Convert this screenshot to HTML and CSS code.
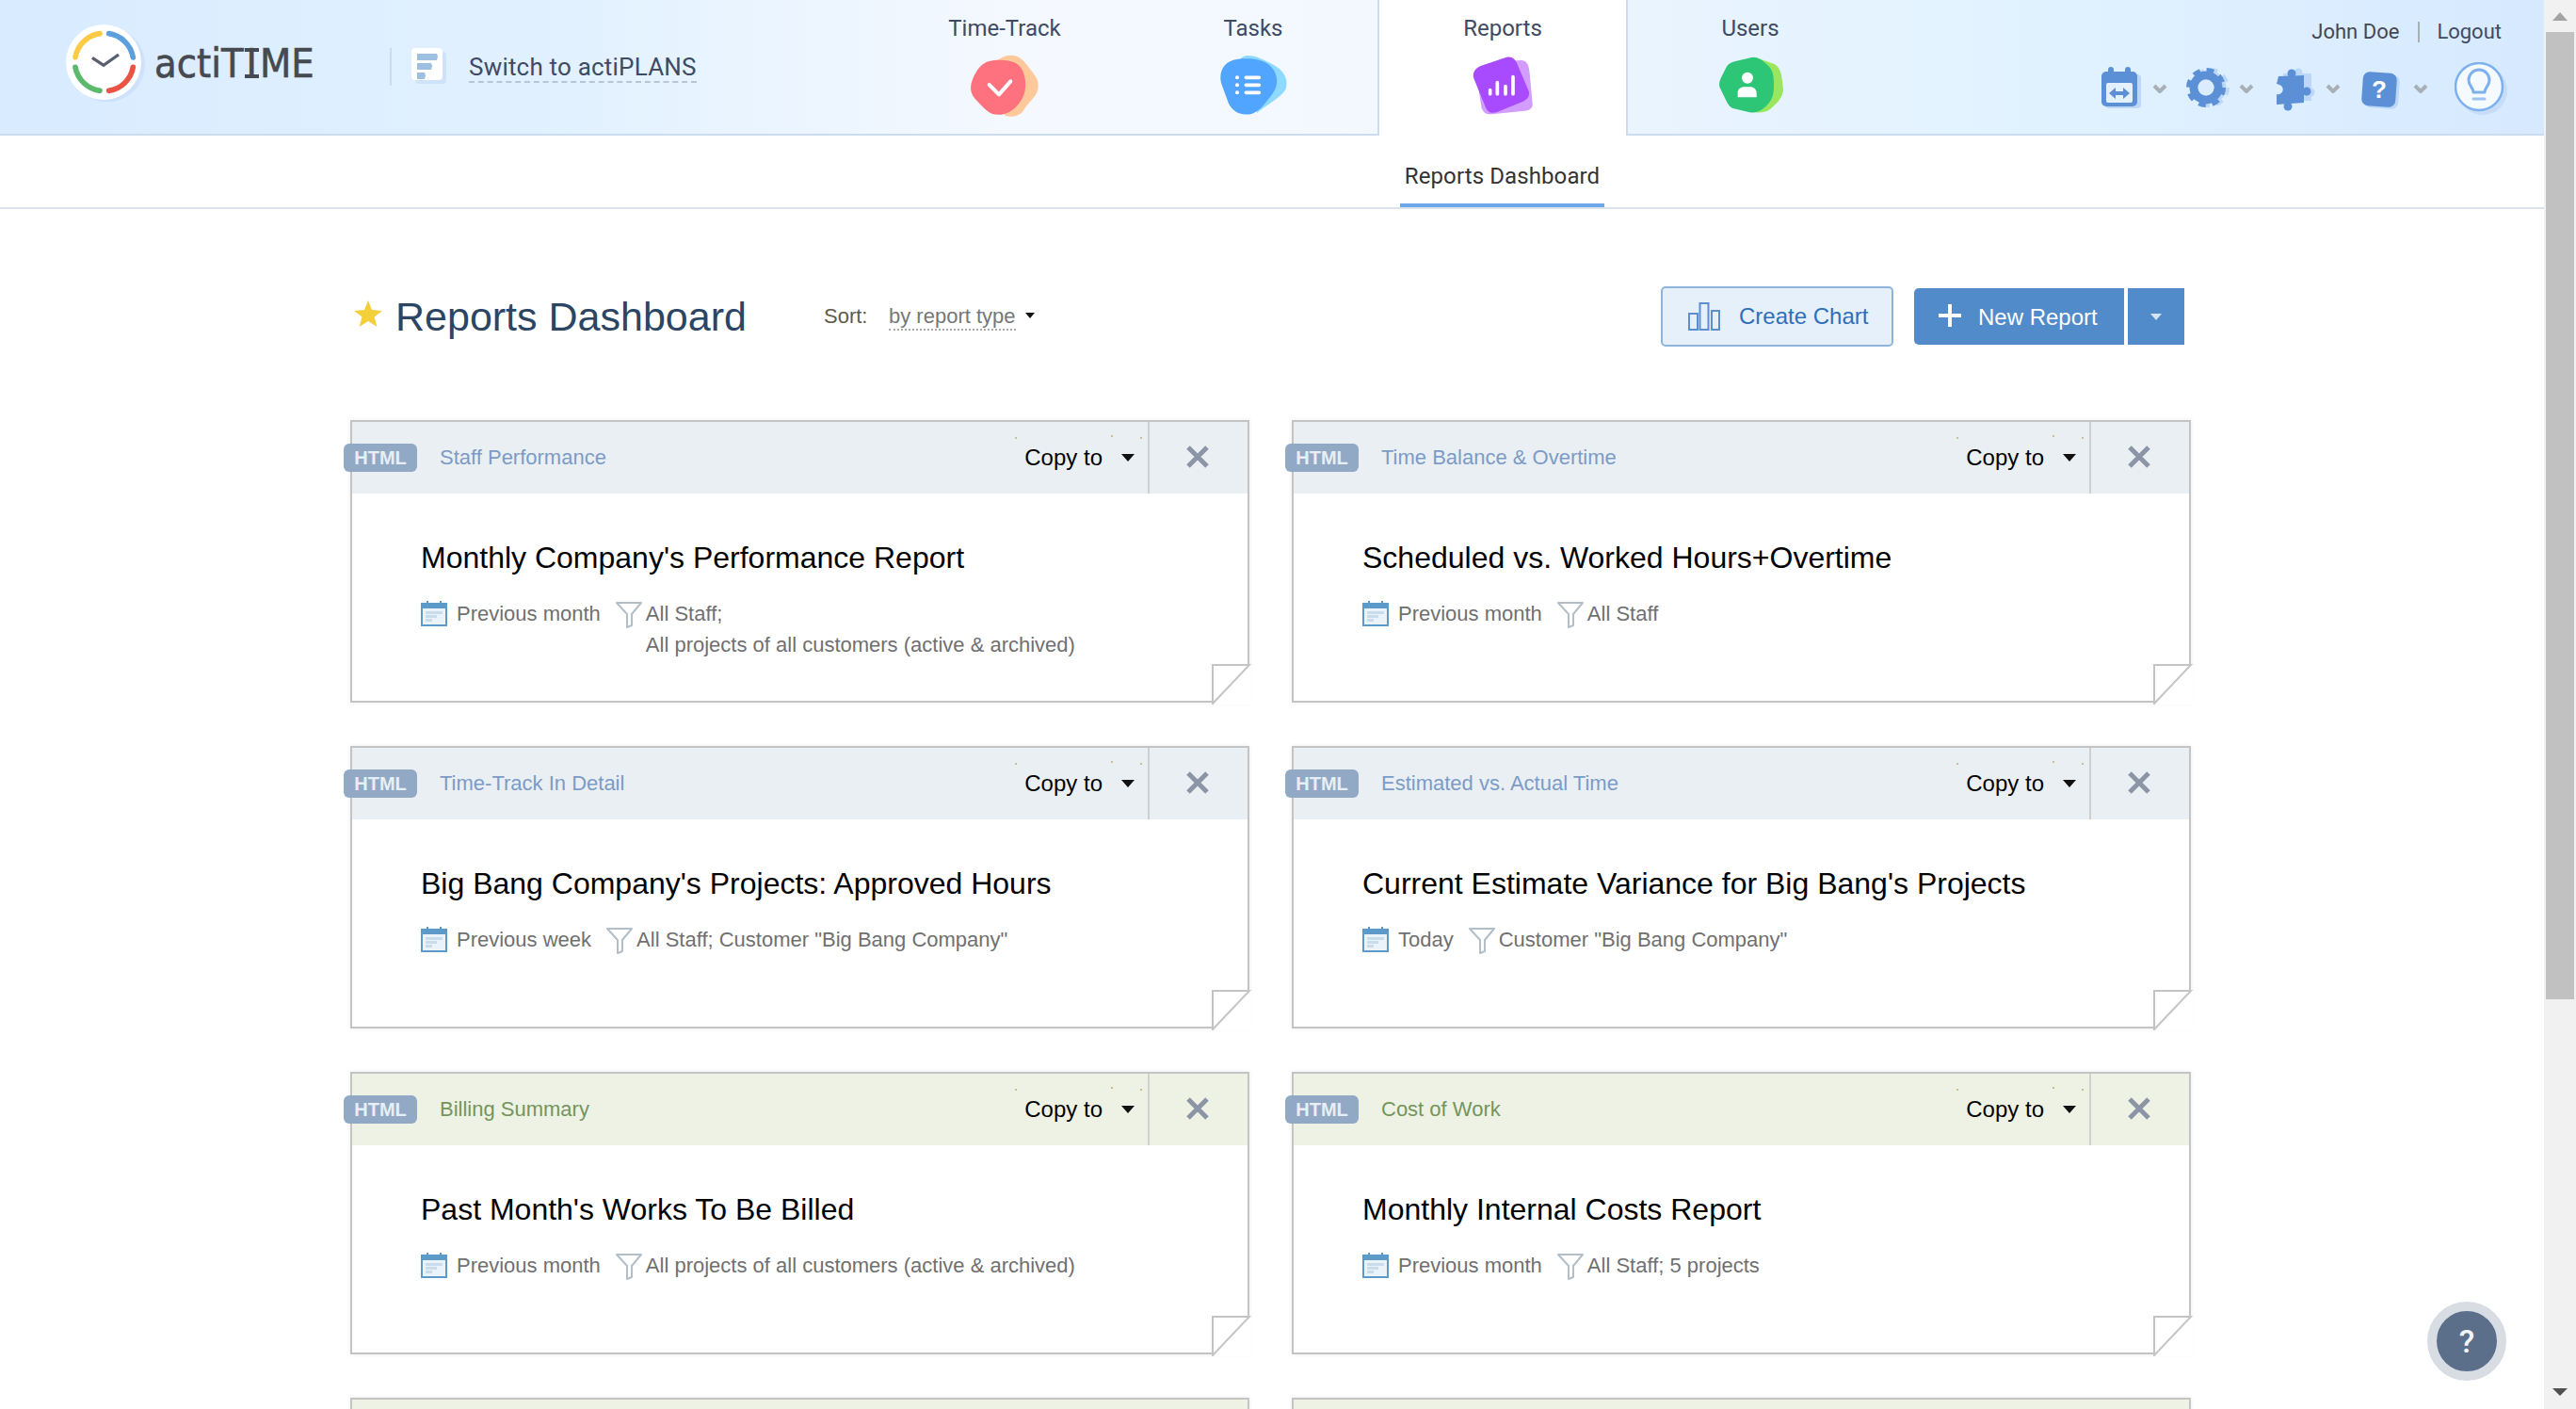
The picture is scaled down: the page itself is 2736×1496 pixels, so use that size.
FILE: index.html
```html
<!DOCTYPE html>
<html lang="en">
<head>
    <meta charset="UTF-8">
    <title>actiTIME - Reports Dashboard</title>
    <link rel="stylesheet" href="styles.css">
</head>
<body>
    <svg class="defs" width="0" height="0">
        <symbol id="i-cal" viewBox="0 0 28 28">
            <rect x="1" y="4" width="26" height="23" fill="#eaf3fa" stroke="#5b9ac9" stroke-width="2"/>
            <rect x="1" y="4" width="26" height="5" fill="#5b9ac9"/>
            <rect x="6" y="1" width="2" height="6" fill="#5b9ac9"/>
            <rect x="20" y="1" width="2" height="6" fill="#5b9ac9"/>
            <rect x="5" y="12" width="18" height="3" fill="#c9dcec"/>
            <rect x="5" y="16" width="12" height="3" fill="#c9dcec"/>
            <rect x="5" y="20" width="7" height="3" fill="#c9dcec"/>
        </symbol>
        <symbol id="i-filter" viewBox="0 0 28 28">
            <path d="M1 1H27L17 13V25L12 27V13Z" fill="#fff" stroke="#b3bfc8" stroke-width="2" stroke-linejoin="round"/>
        </symbol>
        <symbol id="i-close" viewBox="0 0 24 24">
            <path d="M2 2L22 22M22 2L2 22" stroke="#8c95a5" stroke-width="5" fill="none"/>
        </symbol>
        <symbol id="i-fold" viewBox="0 0 42 43">
            <rect width="42" height="43" fill="#fff"/>
            <path d="M1 43V1H40L1 42" fill="none" stroke="#c4c4c4" stroke-width="2"/>
        </symbol>
        <symbol id="i-chevron" viewBox="0 0 16 10">
            <path d="M2 2L8 8L14 2" fill="none" stroke="#a9b0b5" stroke-width="4"/>
        </symbol>
    </svg>

    <div class="page">
        <header class="topbar">
            <div class="logo">
                <svg class="logo-mark" width="97" height="94" viewBox="78 33 291 282">
                    <circle cx="222" cy="175" r="120" fill="#cfe2fb"/>
                    <circle cx="210" cy="168" r="120" fill="#fff"/>
                    <g fill="none" stroke-width="17" stroke-linecap="round">
                        <path d="M120 152A92 92 0 0 1 198 77" stroke="#fbcb45"/>
                        <path d="M227 77A92 92 0 0 1 304 153" stroke="#5b9fdc"/>
                        <path d="M304 184A92 92 0 0 1 227 259" stroke="#ea5444"/>
                        <path d="M120 184A92 92 0 0 0 198 259" stroke="#5cb96c"/>
                        <path d="M174 154L210 178L258 144" stroke="#5a5f70" stroke-width="10" stroke-linecap="butt"/>
                    </g>
                </svg>
                <span class="logo-text">actiT<span class="logo-i">I</span>ME</span>
            </div>
            <div class="switch">
                <svg width="37" height="38" viewBox="0 0 37 38">
                    <rect x="4" y="4" width="33" height="34" rx="4" fill="#cfe2fb"/>
                    <rect width="33" height="34" rx="4" fill="#fff"/>
                    <path d="M6 6H27L28 9L27 13H6ZM6 16H21L22 19L21 23H6ZM6 26H14L15 29L14 33H6Z" fill="#9dbfe0"/>
                </svg>
                <span class="switch-text">Switch to actiPLANS</span>
            </div>

            <nav class="tabs">
                <a class="tab">
                    <span>Time-Track</span>
                    <svg width="84" height="72" viewBox="78 48 252 216">
                        <path d="M225 56C255 56 270 80 285 100C305 125 315 140 310 165C305 190 280 205 265 230C255 250 225 255 205 248L150 100C175 75 195 56 225 56Z" fill="#fec99a"/>
                        <path d="M170 72C215 68 255 75 265 115C277 150 270 190 245 215C225 240 195 250 165 243C145 235 130 215 110 195C90 170 95 150 105 125C120 95 135 75 170 72Z" fill="#fe727f"/>
                        <path d="M155 150L186 181L223 139" fill="none" stroke="#fff" stroke-width="12" stroke-linecap="round" stroke-linejoin="round"/>
                    </svg>
                </a>
                <a class="tab">
                    <span>Tasks</span>
                    <svg width="84" height="72" viewBox="867 48 252 216">
                        <path d="M975 57C1005 57 1030 72 1060 88C1090 105 1105 130 1098 160C1090 185 1050 205 1005 240L950 70C960 60 965 57 975 57Z" fill="#8ed9ff"/>
                        <path d="M945 68C985 65 1035 65 1060 105C1075 135 1070 160 1050 185C1030 210 1015 232 990 242C960 250 930 240 915 210L893 150C880 110 900 72 945 68Z" fill="#52a5ff"/>
                        <g fill="#fff">
                            <circle cx="942" cy="127" r="6"/>
                            <circle cx="942" cy="151" r="6"/>
                            <circle cx="942" cy="175" r="6"/>
                        </g>
                        <path d="M970 127H1012M970 151H1012M970 175H1012" stroke="#fff" stroke-width="11" stroke-linecap="round"/>
                    </svg>
                </a>
                <a class="tab tab-active">
                    <span>Reports</span>
                    <svg width="84" height="72" viewBox="159 48 252 216">
                        <path d="M240 82L340 72C360 70 368 85 370 105L380 210C382 225 370 232 355 233L250 244C232 245 225 240 218 225L200 110Z" fill="#d29dff"/>
                        <path d="M215 90L295 63C315 58 325 68 332 85L368 170C372 185 365 195 350 203L265 238C245 243 235 235 228 215L193 130C188 110 198 97 215 90Z" fill="#a84bff"/>
                        <path d="M245 167V179M268 143V179M294 155V179M318 125V179" stroke="#fff" stroke-width="11" stroke-linecap="round"/>
                    </svg>
                </a>
                <a class="tab">
                    <span>Users</span>
                    <svg width="84" height="72" viewBox="951 48 252 216">
                        <path d="M1095 63L1155 85C1170 95 1175 110 1178 130L1182 165C1182 180 1175 190 1165 205L1140 228C1125 238 1110 240 1090 238Z" fill="#9ae65f"/>
                        <path d="M1085 62C1105 62 1120 75 1135 90C1150 105 1152 125 1152 150C1152 175 1150 195 1130 215C1115 232 1095 240 1075 238L1025 226C1010 222 1005 210 995 190L983 165C975 150 978 140 985 125L1000 95C1005 85 1015 78 1030 75Z" fill="#2dc576"/>
                        <circle cx="1068" cy="128" r="18" fill="#fff"/>
                        <path d="M1037 190V175C1037 162 1048 157 1060 157H1076C1088 157 1097 165 1097 177V190Z" fill="#fff"/>
                    </svg>
                </a>
            </nav>

            <div class="account">
                <div class="user-line">
                    <span class="user-name">John Doe</span>
                    <span class="user-sep"></span>
                    <span class="logout">Logout</span>
                </div>
                <div class="tools">
                    <svg class="tool-cal" width="44" height="44" viewBox="0 0 44 44">
                        <rect x="5" y="8" width="38" height="36" rx="4" fill="#bcd7f7"/>
                        <rect x="8" y="0" width="6" height="10" rx="3" fill="#5b90d6"/>
                        <rect x="26" y="0" width="6" height="10" rx="3" fill="#5b90d6"/>
                        <rect x="1" y="5" width="38" height="37" rx="5" fill="#5b90d6"/>
                        <rect x="6" y="17" width="28" height="21" rx="2" fill="#e3f0ff"/>
                        <path d="M9 28L16 22V26H24V22L31 28L24 34V30H16V34Z" fill="#5b90d6"/>
                    </svg>
                    <svg class="chevron"><use href="#i-chevron"/></svg>
                    <svg class="tool-gear" width="46" height="42" viewBox="0 0 46 42">
                        <g fill="none" stroke="#bcd7f7">
                            <circle cx="25" cy="21" r="13" stroke-width="9"/>
                            <circle cx="25" cy="21" r="18" stroke-width="6" stroke-dasharray="7.5 6.64"/>
                        </g>
                        <g fill="none" stroke="#5b90d6">
                            <circle cx="21" cy="21" r="13" stroke-width="9"/>
                            <circle cx="21" cy="21" r="18" stroke-width="6" stroke-dasharray="7.5 6.64"/>
                        </g>
                        <circle cx="21" cy="21" r="8.5" fill="#dcecff"/>
                    </svg>
                    <svg class="chevron"><use href="#i-chevron"/></svg>
                    <svg class="tool-puzzle" width="42" height="46" viewBox="0 0 42 46">
                        <g fill="#bcd7f7">
                            <circle cx="24" cy="5" r="4.5"/>
                            <rect x="8" y="6" width="30" height="29"/>
                            <circle cx="37" cy="26" r="4.5"/>
                        </g>
                        <g fill="#5b90d6">
                            <circle cx="17" cy="6" r="4.5"/>
                            <path d="M3 9L30 8L30 37L1 39V28A5 5 0 0 0 4 18L1 17Z"/>
                            <circle cx="33" cy="25" r="4.5"/>
                            <circle cx="13" cy="41" r="4.5"/>
                        </g>
                    </svg>
                    <svg class="chevron"><use href="#i-chevron"/></svg>
                    <svg class="tool-help" width="42" height="41" viewBox="0 0 42 41">
                        <rect x="4" y="3" width="36" height="36" rx="7" fill="#bcd7f7" transform="rotate(4 22 21)"/>
                        <rect x="1" y="1" width="36" height="36" rx="7" fill="#5b90d6" transform="rotate(4 19 19)"/>
                        <text x="19" y="28" class="tool-help-mark">?</text>
                    </svg>
                    <svg class="chevron"><use href="#i-chevron"/></svg>
                    <svg class="tool-bulb" width="58" height="57" viewBox="0 0 58 57">
                        <circle cx="30" cy="30" r="26" fill="#c6dcf7"/>
                        <circle cx="26" cy="26" r="25" fill="#f5faff" stroke="#7db1ee" stroke-width="2.5"/>
                        <path d="M20 32C20 27 15 25 15 19A11 11 0 0 1 37 19C37 25 32 27 32 32Z" fill="none" stroke="#7db1ee" stroke-width="3" stroke-linejoin="round"/>
                        <path d="M20 39H32" stroke="#9cc3f2" stroke-width="3" stroke-linecap="round"/>
                    </svg>
                </div>
            </div>
        </header>

        <div class="subnav">
            <a class="subnav-item">Reports Dashboard</a>
        </div>

        <main class="content">
            <div class="page-head">
                <svg class="star" width="30" height="28" viewBox="0 0 30 28">
                    <path d="M15 0L19 10L30 11L21.500 17.500L24.500 28L15 22L5.500 28L8.500 17.500L0 11L11 10Z" fill="#f4cf3c"/>
                </svg>
                <h1>Reports Dashboard</h1>
                <span class="sort-label">Sort:</span>
                <span class="sort-value">by report type</span>
                <span class="caret sort-caret"></span>
                <button class="btn-chart">
                    <svg width="34" height="30" viewBox="0 0 34 30">
                        <path d="M1 12H10V29H1ZM12.500 1H21.500V29H12.500ZM25 9H33V29H25Z" fill="none" stroke="#5b8fd2" stroke-width="2"/>
                    </svg>
                    Create Chart
                </button>
                <button class="btn-new">
                    <svg width="24" height="24" viewBox="0 0 24 24">
                        <path d="M12 0V24M0 12H24" stroke="#fff" stroke-width="4"/>
                    </svg>
                    <span class="btn-new-text">New Report</span>
                </button>
                <button class="btn-more"><span class="caret caret-light"></span></button>
            </div>

            <div class="cards">
                <article class="card">
                    <div class="card-head">
                        <span class="badge">HTML</span>
                        <span class="category">Staff Performance</span>
                        <span class="copy">Copy to<span class="caret"></span></span>
                        <span class="close"><svg width="24" height="24"><use href="#i-close"/></svg></span>
                    </div>
                    <div class="card-body">
                        <h3>Monthly Company's Performance Report</h3>
                        <div class="meta">
                            <svg class="meta-cal"><use href="#i-cal"/></svg>
                            <span>Previous month</span>
                            <svg class="meta-filter"><use href="#i-filter"/></svg>
                            <span>All Staff;<br>All projects of all customers (active &amp; archived)</span>
                        </div>
                    </div>
                    <svg class="fold"><use href="#i-fold"/></svg>
                </article>

                <article class="card">
                    <div class="card-head">
                        <span class="badge">HTML</span>
                        <span class="category">Time Balance &amp; Overtime</span>
                        <span class="copy">Copy to<span class="caret"></span></span>
                        <span class="close"><svg width="24" height="24"><use href="#i-close"/></svg></span>
                    </div>
                    <div class="card-body">
                        <h3>Scheduled vs. Worked Hours+Overtime</h3>
                        <div class="meta">
                            <svg class="meta-cal"><use href="#i-cal"/></svg>
                            <span>Previous month</span>
                            <svg class="meta-filter"><use href="#i-filter"/></svg>
                            <span>All Staff</span>
                        </div>
                    </div>
                    <svg class="fold"><use href="#i-fold"/></svg>
                </article>

                <article class="card">
                    <div class="card-head">
                        <span class="badge">HTML</span>
                        <span class="category">Time-Track In Detail</span>
                        <span class="copy">Copy to<span class="caret"></span></span>
                        <span class="close"><svg width="24" height="24"><use href="#i-close"/></svg></span>
                    </div>
                    <div class="card-body">
                        <h3>Big Bang Company's Projects: Approved Hours</h3>
                        <div class="meta">
                            <svg class="meta-cal"><use href="#i-cal"/></svg>
                            <span>Previous week</span>
                            <svg class="meta-filter"><use href="#i-filter"/></svg>
                            <span>All Staff; Customer "Big Bang Company"</span>
                        </div>
                    </div>
                    <svg class="fold"><use href="#i-fold"/></svg>
                </article>

                <article class="card">
                    <div class="card-head">
                        <span class="badge">HTML</span>
                        <span class="category">Estimated vs. Actual Time</span>
                        <span class="copy">Copy to<span class="caret"></span></span>
                        <span class="close"><svg width="24" height="24"><use href="#i-close"/></svg></span>
                    </div>
                    <div class="card-body">
                        <h3>Current Estimate Variance for Big Bang's Projects</h3>
                        <div class="meta">
                            <svg class="meta-cal"><use href="#i-cal"/></svg>
                            <span>Today</span>
                            <svg class="meta-filter"><use href="#i-filter"/></svg>
                            <span>Customer "Big Bang Company"</span>
                        </div>
                    </div>
                    <svg class="fold"><use href="#i-fold"/></svg>
                </article>

                <article class="card card-green">
                    <div class="card-head">
                        <span class="badge">HTML</span>
                        <span class="category">Billing Summary</span>
                        <span class="copy">Copy to<span class="caret"></span></span>
                        <span class="close"><svg width="24" height="24"><use href="#i-close"/></svg></span>
                    </div>
                    <div class="card-body">
                        <h3>Past Month's Works To Be Billed</h3>
                        <div class="meta">
                            <svg class="meta-cal"><use href="#i-cal"/></svg>
                            <span>Previous month</span>
                            <svg class="meta-filter"><use href="#i-filter"/></svg>
                            <span>All projects of all customers (active &amp; archived)</span>
                        </div>
                    </div>
                    <svg class="fold"><use href="#i-fold"/></svg>
                </article>

                <article class="card card-green">
                    <div class="card-head">
                        <span class="badge">HTML</span>
                        <span class="category">Cost of Work</span>
                        <span class="copy">Copy to<span class="caret"></span></span>
                        <span class="close"><svg width="24" height="24"><use href="#i-close"/></svg></span>
                    </div>
                    <div class="card-body">
                        <h3>Monthly Internal Costs Report</h3>
                        <div class="meta">
                            <svg class="meta-cal"><use href="#i-cal"/></svg>
                            <span>Previous month</span>
                            <svg class="meta-filter"><use href="#i-filter"/></svg>
                            <span>All Staff; 5 projects</span>
                        </div>
                    </div>
                    <svg class="fold"><use href="#i-fold"/></svg>
                </article>

                <article class="card card-green">
                    <div class="card-head"></div>
                </article>
                <article class="card card-green">
                    <div class="card-head"></div>
                </article>
            </div>
        </main>

        <a class="help-float">?</a>
    </div>

    <div class="scrollbar">
        <span class="scroll-up"></span>
        <span class="scroll-thumb"></span>
        <span class="scroll-down"></span>
    </div>
</body>
</html>
```

FILE: styles.css
```css
html, body {
    margin: 0;
    height: 100%;
    overflow: hidden;
}
body {
    display: flex;
    font-family: "Liberation Sans", Arial, sans-serif;
    background: #fff;
}
.defs {
    position: absolute;
}
.page {
    flex: 1;
    min-width: 0;
    height: 100vh;
    overflow: hidden;
    position: relative;
}

/* top bar */
.topbar {
    display: flex;
    height: 144px;
    box-sizing: border-box;
    border-bottom: 2px solid #cbdcef;
    background: linear-gradient(to right, #d8ebff 0, #e2f1ff 600px, #f5f9ff 1100px, #f3f8ff 1460px, #e8f3fe 1800px, #e2f3ff 2130px, #d6e9ff 100%);
    font-family: Roboto, sans-serif;
    color: #3f4a63;
}
.logo {
    display: flex;
    width: 414px;
    padding: 21px 0 0 66px;
    box-sizing: border-box;
}
.logo-mark {
    flex: none;
}
.logo-text {
    height: 52px;
    margin: 20px 0 0 1px;
    font-family: "DejaVu Sans", sans-serif;
    font-stretch: condensed;
    font-size: 43px;
    line-height: 52px;
    color: #46494f;
    -webkit-text-stroke: 0.6px #46494f;
}
/* the logo's I has serifs, the font's has not */
.logo-i {
    display: inline-block;
    position: relative;
    padding: 0 3px;
}
.logo-i::before,
.logo-i::after {
    content: "";
    position: absolute;
    left: 1px;
    right: 1px;
    height: 4px;
    background: #46494f;
}
.logo-i::before {
    top: 10px;
}
.logo-i::after {
    top: 38px;
}
.switch {
    display: flex;
    align-items: flex-start;
    width: 521px;
    height: 40px;
    margin-top: 51px;
    padding-left: 21px;
    box-sizing: border-box;
    border-left: 2px solid #c8dcf2;
}
.switch-text {
    margin: 5px 0 0 24px;
    font-size: 26px;
    letter-spacing: 0.2px;
    line-height: 30px;
    border-bottom: 2px dashed #b8c6d4;
}
.tabs {
    display: flex;
}
.tab {
    width: 264px;
    box-sizing: border-box;
    display: flex;
    flex-direction: column;
    align-items: center;
    padding-top: 14px;
    font-size: 24px;
    line-height: 32px;
}
.tab svg {
    margin-top: 10px;
}
.tab-active {
    width: 262px;
    margin-left: 2px;
    height: 144px;
    background: #fff;
    box-shadow: -2px 0 0 #cbdcef, 2px 0 0 #cbdcef;
}
.account {
    margin-left: auto;
    padding: 18px 45px 0 0;
    display: flex;
    flex-direction: column;
    align-items: flex-end;
}
.user-line {
    display: flex;
    align-items: center;
    font-size: 22px;
    line-height: 32px;
}
.user-name {
    color: #46464f;
}
.user-sep {
    width: 2px;
    height: 22px;
    margin: 0 18px 0 20px;
    background: #a9b0b5;
}
.tools {
    display: flex;
    align-items: flex-start;
    margin: 16px -8px 0 0;
}
.tools svg {
    flex: none;
}
.chevron {
    width: 16px;
    height: 10px;
    margin-top: 23px;
}
.tool-cal {
    margin: 5px 11px 0 0;
}
.tool-gear {
    margin: 6px 10px 0 20px;
}
.tool-puzzle {
    margin: 6px 11px 0 23px;
}
.tool-help {
    margin: 10px 13px 0 22px;
}
.tool-bulb {
    margin-left: 28px;
}
.tool-help-mark {
    font-family: "Liberation Sans", sans-serif;
    font-size: 26px;
    font-weight: bold;
    fill: #fff;
    text-anchor: middle;
}

/* sub navigation */
.subnav {
    height: 78px;
    box-sizing: border-box;
    padding-left: 1487px;
    border-bottom: 2px solid #dde3ea;
}
.subnav-item {
    display: block;
    width: 217px;
    height: 76px;
    box-sizing: border-box;
    padding-top: 27px;
    border-bottom: 4px solid #6ea6ea;
    text-align: center;
    font-family: Roboto, sans-serif;
    font-size: 24px;
    letter-spacing: 0.1px;
    line-height: 32px;
    color: #333;
}

/* page heading */
.content {
    padding: 82px 0 0 372px;
    width: 1956px;
}
.page-head {
    display: flex;
    align-items: center;
    height: 64px;
    padding-right: 8px;
    margin-bottom: 78px;
}
.star {
    margin: -6px 14px 0 4px;
    flex: none;
}
h1 {
    margin: 0;
    width: 455px;
    font-size: 43px;
    font-weight: normal;
    line-height: 50px;
    color: #2c4563;
}
.sort-label {
    width: 69px;
    font-size: 22px;
    color: #5f5a50;
}
.sort-value {
    margin-top: 2px;
    font-size: 22px;
    line-height: 26px;
    color: #777;
    border-bottom: 2px dotted #aaa;
}
.caret {
    display: inline-block;
    width: 0;
    height: 0;
    border-style: solid;
    border-width: 8px 7px 0;
    border-color: #111 transparent transparent;
}
.sort-caret {
    border-width: 6px 5px 0;
    margin: -2px 0 0 10px;
}
.page-head button {
    font-family: "Liberation Sans", sans-serif;
    font-size: 24px;
    display: flex;
    align-items: center;
    border: none;
    box-sizing: border-box;
}
.btn-chart {
    margin-left: auto;
    width: 247px;
    height: 64px;
    padding: 0 0 0 27px;
    gap: 20px;
    background: #e5f0fb;
    border: 2px solid #8fb4dc !important;
    border-radius: 5px;
    color: #2f6fb8;
}
.btn-new {
    width: 223px;
    height: 60px;
    margin-left: 22px;
    padding: 0 0 0 26px;
    gap: 18px;
    background: #528bc9;
    border-radius: 5px 0 0 5px;
    color: #fff;
}
.btn-new svg {
    margin-top: -2px;
}
.btn-new-text {
    margin-top: 2px;
}
.btn-more {
    width: 60px;
    height: 60px;
    margin-left: 4px;
    justify-content: center;
    background: #528bc9;
}
.caret-light {
    border-top-color: #d5e3f2;
    border-width: 7px 6px 0;
}

/* report cards */
.cards {
    display: grid;
    grid-template-columns: 955px 955px;
    gap: 46px 45px;
}
.card {
    position: relative;
    height: 300px;
    box-sizing: border-box;
    border: 2px solid #c4c4c4;
    background: #fff;
    box-shadow: 0 0 5px rgba(0, 0, 0, 0.08);
}
.card-head {
    display: flex;
    align-items: center;
    height: 76px;
    background-color: #eaeff4;
    background-image: linear-gradient(#cbbf8f, #cbbf8f), linear-gradient(#cbbf8f, #cbbf8f), linear-gradient(#cbbf8f, #cbbf8f);
    background-size: 2px 2px;
    background-repeat: no-repeat;
    background-position: right 245px top 16px, right 143px top 14px, right 112px top 16px;
}
.card-green .card-head {
    background-color: #eef2e4;
}
.badge {
    width: 78px;
    height: 30px;
    margin: -1px 0 0 -9px;
    border-radius: 6px;
    background: #91a9c4;
    color: #e8eef5;
    font-size: 20px;
    font-weight: bold;
    line-height: 30px;
    text-align: center;
}
.category {
    margin-left: 24px;
    font-size: 22px;
    color: #7c9bc6;
}
.card-green .category {
    color: #74955c;
}
.copy {
    display: flex;
    align-items: center;
    margin-left: auto;
    padding-right: 14px;
    font-size: 24px;
    color: #000;
}
.copy .caret {
    margin-left: 20px;
}
.close {
    display: flex;
    align-items: center;
    justify-content: center;
    width: 104px;
    height: 76px;
    border-left: 2px solid #d0d0d0;
}
.close svg {
    margin: -2px 2px 0 0;
}
.card-body {
    padding: 50px 0 0 73px;
}
h3 {
    margin: 0;
    font-size: 32px;
    font-weight: normal;
    line-height: 36px;
    color: #000;
}
.meta {
    display: flex;
    align-items: flex-start;
    margin-top: 25px;
    font-size: 22px;
    line-height: 33px;
    color: #707070;
}
.meta svg {
    flex: none;
    width: 28px;
    height: 28px;
}
.meta-cal {
    margin: 2px 10px 0 0;
}
.meta-filter {
    margin: 4px 4px 0 16px;
}
.fold {
    position: absolute;
    right: -4px;
    bottom: -4px;
    width: 42px;
    height: 43px;
}

/* floating help */
.help-float {
    position: absolute;
    right: 40px;
    bottom: 30px;
    width: 64px;
    height: 64px;
    border: 10px solid #d8dde4;
    border-radius: 50%;
    background: #5b6f8a;
    color: #f2f4f7;
    font-family: Roboto, sans-serif;
    font-size: 34px;
    font-weight: 500;
    line-height: 64px;
    text-align: center;
}

/* scrollbar */
.scrollbar {
    flex: none;
    width: 34px;
    height: 100vh;
    box-sizing: border-box;
    display: flex;
    flex-direction: column;
    align-items: center;
    background: #f1f1f1;
}
.scroll-up {
    width: 0;
    height: 0;
    margin-top: 13px;
    border-style: solid;
    border-width: 0 8px 9px;
    border-color: transparent transparent #a3a3a3;
}
.scroll-thumb {
    width: 30px;
    height: 1027px;
    margin-top: 12px;
    background: #c1c1c1;
}
.scroll-down {
    width: 0;
    height: 0;
    margin-top: auto;
    margin-bottom: 14px;
    border-style: solid;
    border-width: 8px 8px 0;
    border-color: #505050 transparent transparent;
}
```
